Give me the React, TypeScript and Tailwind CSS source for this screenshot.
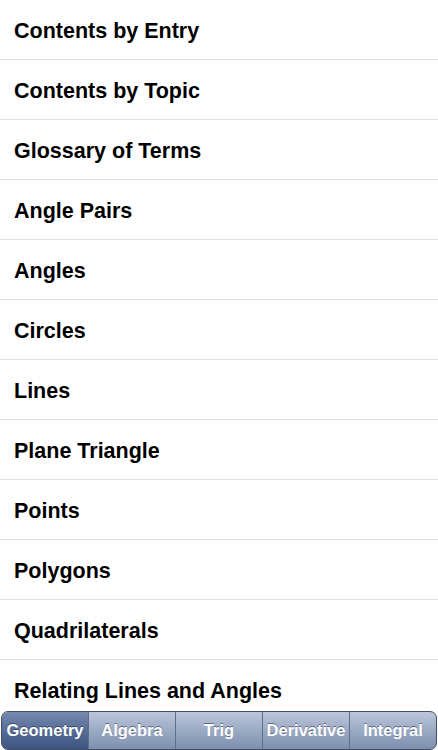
const items = [
  "Contents by Entry",
  "Contents by Topic",
  "Glossary of Terms",
  "Angle Pairs",
  "Angles",
  "Circles",
  "Lines",
  "Plane Triangle",
  "Points",
  "Polygons",
  "Quadrilaterals",
  "Relating Lines and Angles",
];

const tabs = ["Geometry", "Algebra", "Trig", "Derivative", "Integral"];

export default function App() {
  return (
    <div className="flex h-[750px] w-[438px] flex-col overflow-hidden bg-white font-['Liberation_Sans',Arial,sans-serif]">
      {/* List */}
      <div className="h-[711px] shrink-0 overflow-hidden">
        {items.map((t) => (
          <div
            key={t}
            className="flex h-[60px] items-center border-b border-[#e0e0e0] px-[14px] pt-[3px] text-[21.5px] font-bold text-black"
          >
            {t}
          </div>
        ))}
      </div>

      {/* Segmented tab bar */}
      <div className="px-[1px]">
        <div className="flex h-[39px] overflow-hidden rounded-[7px] border border-[#454e5f] bg-gradient-to-b from-[#bcc7da] via-[#9aaac4] to-[#7d90b0]">
          {tabs.map((t, i) => (
            <div
              key={t}
              className={
                "flex flex-1 items-center justify-center text-[16.5px] font-bold text-white [text-shadow:0_-1px_0_rgba(30,40,60,0.55)] " +
                (i > 0 ? "border-l border-[#5f6f8a] " : "") +
                (i === 0 ? "bg-gradient-to-b from-[#7489ad] via-[#566d96] to-[#3c5480]" : "")
              }
            >
              {t}
            </div>
          ))}
        </div>
      </div>
    </div>
  );
}
